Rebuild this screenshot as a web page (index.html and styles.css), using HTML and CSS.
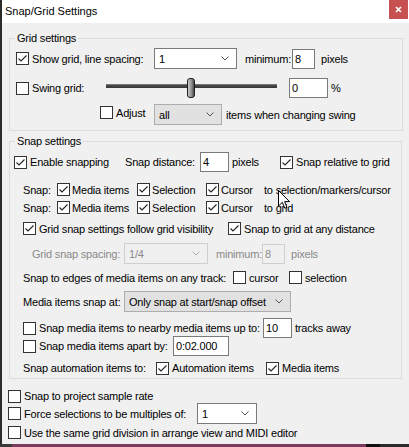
FILE: index.html
```html
<!DOCTYPE html>
<html>
<head>
<meta charset="utf-8">
<title>Snap/Grid Settings</title>
<link rel="stylesheet" href="styles.css">
</head>
<body>
<svg class="defs" width="0" height="0">
  <symbol id="tick" viewBox="0 0 11 11"><polyline points="1.5,5.5 4,8 9.5,2.5" fill="none" stroke="#222" stroke-width="1.1"/></symbol>
  <symbol id="chev" viewBox="0 0 8 5"><polyline points="0.5,0.5 4,4 7.5,0.5" fill="none" stroke="currentColor" stroke-width="1"/></symbol>
</svg>
<div class="window">
  <div class="titlebar">
    <span class="title">Snap/Grid Settings</span>
    <div class="close"><svg width="19" height="19" viewBox="0 0 19 19"><path d="M7 7 L12 12 M12 7 L7 12" stroke="#fff" stroke-width="1.7"/></svg></div>
  </div>
  <div class="content">
    <fieldset class="group grid-group">
      <legend>Grid settings</legend>
      <div class="row g1">
        <label class="chk"><span class="box"><svg><use href="#tick"/></svg></span>Show grid, line spacing:</label>
        <div class="select w83"><span>1</span><svg class="chev"><use href="#chev"/></svg></div>
        <span>minimum:</span>
        <div class="input w23">8</div>
        <span>pixels</span>
      </div>
      <div class="row g2">
        <label class="chk"><span class="box"></span>Swing grid:</label>
        <div class="slider"><div class="thumb"></div></div>
        <div class="input w39">0</div>
        <span>%</span>
      </div>
      <div class="row g3">
        <label class="chk adjust"><span class="box"></span>Adjust</label>
        <div class="select combo w68"><span>all</span><svg class="chev"><use href="#chev"/></svg></div>
        <span>items when changing swing</span>
      </div>
    </fieldset>

    <fieldset class="group snap-group">
      <legend>Snap settings</legend>
      <div class="row s1">
        <label class="chk"><span class="box"><svg><use href="#tick"/></svg></span>Enable snapping</label>
        <span>Snap distance:</span>
        <div class="input w29">4</div>
        <span>pixels</span>
        <label class="chk"><span class="box"><svg><use href="#tick"/></svg></span>Snap relative to grid</label>
      </div>
      <div class="row s2">
        <span>Snap:</span>
        <label class="chk tight"><span class="box"><svg><use href="#tick"/></svg></span>Media items</label>
        <label class="chk tight"><span class="box"><svg><use href="#tick"/></svg></span>Selection</label>
        <label class="chk tight"><span class="box"><svg><use href="#tick"/></svg></span>Cursor</label>
        <span>to selection/markers/cursor</span>
      </div>
      <div class="row s3">
        <span>Snap:</span>
        <label class="chk tight"><span class="box"><svg><use href="#tick"/></svg></span>Media items</label>
        <label class="chk tight"><span class="box"><svg><use href="#tick"/></svg></span>Selection</label>
        <label class="chk tight"><span class="box"><svg><use href="#tick"/></svg></span>Cursor</label>
        <span>to grid</span>
      </div>
      <div class="row s4">
        <label class="chk"><span class="box"><svg><use href="#tick"/></svg></span>Grid snap settings follow grid visibility</label>
        <label class="chk"><span class="box"><svg><use href="#tick"/></svg></span>Snap to grid at any distance</label>
      </div>
      <div class="row s5 muted">
        <span>Grid snap spacing:</span>
        <div class="select disabled w84"><span>1/4</span><svg class="chev"><use href="#chev"/></svg></div>
        <span>minimum:</span>
        <div class="input disabled w23">8</div>
        <span>pixels</span>
      </div>
      <div class="row s6">
        <span>Snap to edges of media items on any track:</span>
        <label class="chk"><span class="box"></span>cursor</label>
        <label class="chk"><span class="box"></span>selection</label>
      </div>
      <div class="row s7">
        <span>Media items snap at:</span>
        <div class="select combo w167"><span>Only snap at start/snap offset</span><svg class="chev"><use href="#chev"/></svg></div>
      </div>
      <div class="row s8">
        <label class="chk"><span class="box"></span>Snap media items to nearby media items up to:</label>
        <div class="input w29">10</div>
        <span>tracks away</span>
      </div>
      <div class="row s9">
        <label class="chk"><span class="box"></span>Snap media items apart by:</label>
        <div class="input w56">0:02.000</div>
      </div>
      <div class="row s10">
        <span>Snap automation items to:</span>
        <label class="chk"><span class="box"><svg><use href="#tick"/></svg></span>Automation items</label>
        <label class="chk"><span class="box"><svg><use href="#tick"/></svg></span>Media items</label>
      </div>
    </fieldset>
  </div>

  <div class="extras">
    <div class="row b1">
      <label class="chk"><span class="box"></span>Snap to project sample rate</label>
    </div>
    <div class="row b2">
      <label class="chk"><span class="box"></span>Force selections to be multiples of:</label>
      <div class="select w60"><span>1</span><svg class="chev"><use href="#chev"/></svg></div>
    </div>
    <div class="row b3">
      <label class="chk"><span class="box"></span>Use the same grid division in arrange view and MIDI editor</label>
    </div>
  </div>

  <svg class="cursor" width="12" height="19" viewBox="0 0 12 19"><path d="M0.5 0.5 V16 L4.3 12.3 L6.8 18.2 L9 17.3 L6.6 11.6 H11.5 Z" fill="#fff" stroke="#000" stroke-width="1" stroke-linejoin="miter"/></svg>
</div>
<div class="taskbar">
  <span class="tb-a"></span><span class="tb-b"></span><span class="tb-c"></span><span class="tb-d"></span>
</div>
</body>
</html>
```

FILE: styles.css
```css
* { box-sizing: border-box; }
html, body { margin: 0; padding: 0; }
body {
  width: 409px;
  height: 447px;
  overflow: hidden;
  background: #f0f0f0;
  font-family: "Liberation Sans", Arial, sans-serif;
  font-size: 11px;
  letter-spacing: -0.2px;
  color: #000;
  display: flex;
  flex-direction: column;
}
.defs { position: absolute; width: 0; height: 0; }

.window {
  position: relative;
  height: 444px;
  border-left: 2px solid #2b2b2b;
  background: #f0f0f0;
  display: flex;
  flex-direction: column;
}

.titlebar {
  height: 23px;
  flex: none;
  background: #fff;
  display: flex;
  align-items: flex-start;
  justify-content: space-between;
}
.title {
  padding-left: 3px;
  line-height: 23px;
  letter-spacing: 0;
}
.close {
  width: 19px;
  height: 19px;
  margin-right: 1px;
  background: #c75050;
}
.close svg { display: block; }

.content { padding-left: 7px; }

.group {
  margin: 0;
  padding: 0 0 5px;
  border: 1px solid #dcdcdc;
  min-width: 0;
}
.grid-group { width: 394px; margin-top: 8px; }
.snap-group { width: 393px; margin-top: 3px; padding-bottom: 2px; }
legend {
  margin-left: 5px;
  padding: 0 2px;
  line-height: 14px;
  height: 14px;
}

.row {
  display: grid;
  align-items: center;
  justify-items: start;
  white-space: nowrap;
}

.chk {
  display: flex;
  align-items: center;
  gap: 3px;
}
.chk.tight { gap: 2px; }
.box {
  width: 13px;
  height: 13px;
  flex: none;
  border: 1px solid #333;
  background: #fff;
}
.box svg { display: block; width: 11px; height: 11px; }

.select {
  display: flex;
  align-items: center;
  justify-content: space-between;
  height: 21px;
  padding: 0 7px 0 4px;
  border: 1px solid #7a7a7a;
  background: #fff;
  color: #000;
}
.select.combo { background: #e1e1e1; border-color: #adadad; }
.select.disabled { background: #f0f0f0; border-color: #cfcfcf; color: #8a8a8a; }
.chev { width: 8px; height: 5px; color: #555; flex: none; }
.select.disabled .chev { color: #b0b0b0; }

.input {
  height: 20px;
  border: 1px solid #7a7a7a;
  background: #fff;
  padding-left: 2px;
  display: flex;
  align-items: center;
}
.input.disabled { border-color: #cfcfcf; background: #f0f0f0; color: #8a8a8a; }

.w23 { width: 23px; }
.w29 { width: 29px; }
.w39 { width: 39px; }
.w56 { width: 56px; }
.w60 { width: 60px; }
.w68 { width: 68px; }
.w83 { width: 83px; }
.w84 { width: 84px; }
.w167 { width: 167px; }

.muted { color: #8a8a8a; }

.slider {
  width: 171px;
  height: 20px;
  background: linear-gradient(#8c8c8c, #444 40%, #3a3a3a) 0 6px / 100% 4px no-repeat;
  display: flex;
}
.thumb {
  margin-left: 81px;
  width: 8px;
  height: 20px;
  border: 1px solid #1e1e1e;
  border-radius: 3px;
  background: linear-gradient(90deg, #c8c8c8, #9a9a9a 50%, #4a4a4a);
}

/* grid rows */
.g1 { grid-template-columns: 138px 91px 47px 29px auto; height: 21px; margin-top: 3px; padding-left: 6px; }
.g2 { grid-template-columns: 90px 183px 42px auto; height: 20px; margin-top: 9px; padding-left: 6px; }
.g3 { grid-template-columns: 54px 72px auto; height: 21px; margin-top: 6px; padding-left: 90px; }
.adjust { align-self: start; margin-top: 2px; }

/* snap rows */
.s1 { grid-template-columns: 111px 75px 32px 48px auto; height: 20px; margin-top: 4px; padding-left: 4px; }
.s2 { grid-template-columns: 34px 80px 69px 58px auto; height: 15px; margin-top: 10px; padding-left: 13px; }
.s3 { grid-template-columns: 34px 80px 69px 58px auto; height: 15px; margin-top: 3px; padding-left: 13px; }
.s4 { grid-template-columns: 205px auto; height: 15px; margin-top: 6px; padding-left: 13px; }
.s5 { grid-template-columns: 92px 92px 46px 29px auto; height: 20px; margin-top: 7px; padding-left: 22px; }
.s6 { grid-template-columns: 210px 56px auto; height: 15px; margin-top: 7px; padding-left: 13px; }
.s7 { grid-template-columns: 101px auto; height: 21px; margin-top: 6px; padding-left: 13px; }
.s8 { grid-template-columns: 240px 32px auto; height: 20px; margin-top: 6px; padding-left: 13px; }
.s9 { grid-template-columns: 150px auto; height: 20px; margin-top: -2px; padding-left: 13px; }
.s10 { grid-template-columns: 133px 110px auto; height: 16px; margin-top: 4px; padding-left: 13px; }

/* rows below the groups */
.extras { padding-left: 6px; }
.b1 { height: 14px; margin-top: 10px; }
.b2 { grid-template-columns: 189px auto; height: 21px; }
.b3 { height: 15px; margin-top: 1px; }

.cursor {
  position: absolute;
  left: 276px;
  top: 190px;
}

.taskbar { height: 3px; flex: none; display: flex; }
.tb-a { width: 12px; background: #3a3a3a; }
.tb-b { width: 354px; background: #7b3a60; }
.tb-c { width: 14px; background: #111; }
.tb-d { flex: 1; background: #2b2b2b; }
```
